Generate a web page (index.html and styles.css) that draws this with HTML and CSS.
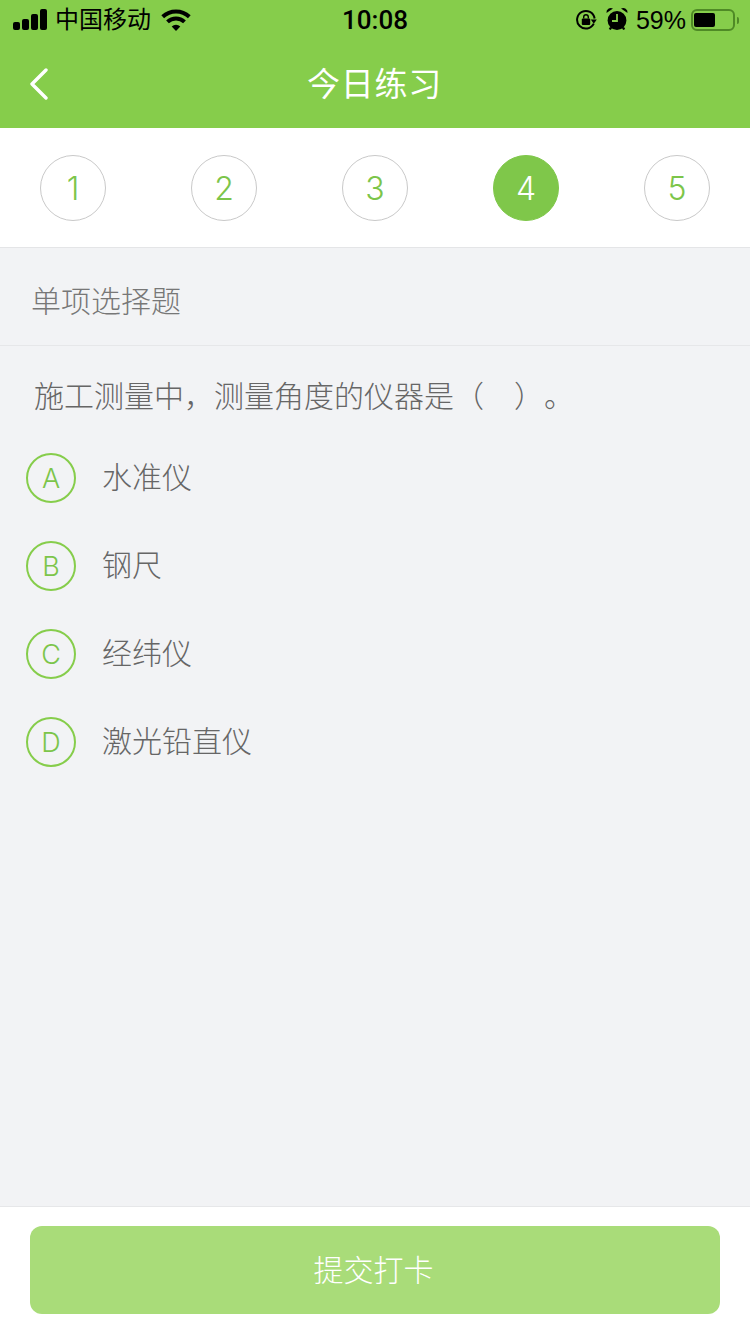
FILE: index.html
```html
<!DOCTYPE html>
<html lang="zh-CN">
<head>
    <meta charset="UTF-8">
    <meta name="viewport" content="width=device-width, initial-scale=1.0">
    <title>今日练习</title>
    <link rel="stylesheet" href="styles.css">
</head>
<body>
    <!-- Status bar + title -->
    <header class="top">
        <div class="status">
            <div class="status-left">
                <div class="signal"><i></i><i></i><i></i><i></i></div>
                <span class="carrier">中国移动</span>
                <svg class="wifi" width="30" height="22" viewBox="0 0 30 22">
                    <path d="M1.7 7.74 A19.5 19.5 0 0 1 28.3 7.74" fill="none" stroke="#000" stroke-width="4"/>
                    <path d="M6.5 12.86 A12.5 12.5 0 0 1 23.5 12.86" fill="none" stroke="#000" stroke-width="4"/>
                    <path d="M15 22 L10.7 17.4 A6.3 6.3 0 0 1 19.3 17.4 Z" fill="#000"/>
                </svg>
            </div>
            <span class="clock">10:08</span>
            <div class="status-right">
                <svg class="lock" width="22" height="22" viewBox="0 0 22 22">
                    <path d="M18.8 14.6 A8.8 8.8 0 1 1 19.6 9.5" fill="none" stroke="#000" stroke-width="2"/>
                    <path d="M15.8 10.5 L21.8 10.5 L18.8 14.8 Z" fill="#000"/>
                    <rect x="6.8" y="9.5" width="8.4" height="6.5" rx="1" fill="#000"/>
                    <path d="M8.7 9.5 V8 A2.3 2.3 0 0 1 13.3 8 V9.5" fill="none" stroke="#000" stroke-width="1.4"/>
                </svg>
                <svg class="alarm" width="24" height="26" viewBox="0 0 24 26">
                    <circle cx="12" cy="14.5" r="9.4" fill="#000"/>
                    <path d="M1.5 7 A4.4 4.4 0 0 1 8 2.5 Z M22.5 7 A4.4 4.4 0 0 0 16 2.5 Z" fill="#000"/>
                    <path d="M12 8 V15 H7" fill="none" stroke="#86cd4b" stroke-width="1.8"/>
                    <path d="M6 21.5 L4.8 23.5 M18 21.5 L19.2 23.5" stroke="#000" stroke-width="2.4"/>
                </svg>
                <span class="battery-text">59%</span>
                <div class="battery"><div class="battery-fill"></div></div>
                <div class="battery-cap"></div>
            </div>
        </div>
        <div class="titlebar">
            <svg class="back" width="20" height="32" viewBox="0 0 20 32">
                <path d="M17 2 L3 16 L17 30" fill="none" stroke="#fff" stroke-width="3.4" stroke-linecap="round" stroke-linejoin="round"/>
            </svg>
            <h1>今日练习</h1>
        </div>
    </header>

    <!-- Question numbers -->
    <nav class="steps">
        <div class="step">1</div>
        <div class="step">2</div>
        <div class="step">3</div>
        <div class="step active">4</div>
        <div class="step">5</div>
    </nav>

    <main class="main">
        <div class="qtype">单项选择题</div>
        <p class="question">施工测量中，测量角度的仪器是（<span class="blank"></span>）。</p>
        <ul class="options">
            <li><span class="letter">A</span><span class="opt-text">水准仪</span></li>
            <li><span class="letter">B</span><span class="opt-text">钢尺</span></li>
            <li><span class="letter">C</span><span class="opt-text">经纬仪</span></li>
            <li><span class="letter">D</span><span class="opt-text">激光铅直仪</span></li>
        </ul>
    </main>

    <footer class="bottom">
        <button type="button" class="submit">提交打卡</button>
    </footer>
</body>
</html>
```

FILE: styles.css
```css
* {
    box-sizing: border-box;
}

html, body {
    height: 100%;
}

body {
    margin: 0;
    display: flex;
    flex-direction: column;
    height: 1334px;
    overflow: hidden;
    background-color: #f2f3f5;
    font-family: "Liberation Sans", Arial, "Noto Sans CJK SC", sans-serif;
}

.top {
    height: 128px;
    flex: none;
    background-color: #86cd4b;
}

.status {
    height: 40px;
    padding: 0 11px 0 13px;
    display: flex;
    align-items: center;
    justify-content: space-between;
    position: relative;
    color: #000;
}

.status-left, .status-right {
    display: flex;
    align-items: center;
}

.signal {
    display: flex;
    align-items: flex-end;
    gap: 2px;
    height: 21px;
    margin-top: -1px;
}

.signal i {
    display: block;
    width: 7px;
    border-radius: 2px;
    background-color: #000;
}

.signal i:nth-child(1) { height: 8px; }
.signal i:nth-child(2) { height: 11px; }
.signal i:nth-child(3) { height: 16px; }
.signal i:nth-child(4) { height: 21px; }

.carrier {
    margin-left: 8px;
    font-size: 24px;
    line-height: 42px;
}

.wifi {
    margin-left: 10px;
    margin-top: 0;
}

.clock {
    position: absolute;
    left: 0;
    right: 0;
    text-align: center;
    font-family: Roboto, sans-serif;
    font-weight: 500;
    font-size: 26px;
    line-height: 42px;
}

.status-right {
    position: relative;
    z-index: 1;
}

.lock {
    margin-right: 1px;
}

.alarm {
    margin-left: 7px;
    margin-top: -3px;
}

.battery-text {
    margin-left: 7px;
    font-size: 25px;
    line-height: 40px;
}

.battery {
    width: 44px;
    height: 22px;
    margin-left: 5px;
    padding: 2px 1px;
    border: 2px solid #4f8a26;
    border-radius: 6px;
}

.battery-fill {
    width: 21px;
    height: 100%;
    border-radius: 2px;
    background-color: #000;
}

.battery-cap {
    width: 2px;
    height: 7px;
    margin-left: 2px;
    border-radius: 0 2px 2px 0;
    background-color: #4f8a26;
}

.titlebar {
    height: 88px;
    padding: 0 1px 4px 0;
    display: flex;
    align-items: center;
    justify-content: center;
    position: relative;
}

.back {
    position: absolute;
    left: 29px;
    top: 28px;
}

.titlebar h1 {
    margin: 0;
    color: #fff;
    font-size: 33px;
    font-weight: normal;
    letter-spacing: 0.8px;
}

.steps {
    flex: none;
    height: 120px;
    padding: 27px 40px 0;
    display: flex;
    justify-content: space-between;
    align-items: flex-start;
    background-color: #fff;
    border-bottom: 1px solid #e4e5e7;
}

.step {
    width: 66px;
    height: 66px;
    border: 1px solid #c9c9c9;
    border-radius: 50%;
    display: flex;
    align-items: center;
    justify-content: center;
    color: #7cc54a;
    font-family: Inter, sans-serif;
    font-weight: 350;
    font-size: 32px;
}

.step.active {
    border-color: #7fc74a;
    background-color: #7fc74a;
    color: #fff;
}

.main {
    flex: 1;
    min-height: 0;
}

.qtype {
    height: 98px;
    padding: 4px 0 0 31px;
    display: flex;
    align-items: center;
    border-bottom: 1px solid #e6e7e9;
    color: #777;
    font-size: 30px;
    font-weight: 300;
}

.question {
    margin: 0;
    padding: 31px 0 0 34px;
    color: #666;
    font-size: 30px;
    font-weight: 300;
    line-height: 40px;
    text-spacing-trim: space-all;
}

.blank {
    display: inline-block;
    width: 30px;
}

.options {
    list-style: none;
    margin: 17px 0 0;
    padding: 0 0 0 26px;
}

.options li {
    height: 88px;
    display: flex;
    align-items: center;
}

.opt-text {
    margin-bottom: 6px;
    color: #666;
    font-size: 30px;
    font-weight: 300;
}

.letter {
    width: 50px;
    height: 50px;
    margin-right: 26px;
    border: 2px solid #86cd4b;
    border-radius: 50%;
    display: flex;
    align-items: center;
    justify-content: center;
    color: #7cc54a;
    font-family: Inter, sans-serif;
    font-weight: 350;
    font-size: 27px;
}

.bottom {
    flex: none;
    height: 128px;
    padding: 19px 30px 0;
    background-color: #fff;
    border-top: 1px solid #e6e7e9;
}

.submit {
    display: block;
    width: 100%;
    height: 88px;
    padding: 0 3px 4px 0;
    border: none;
    border-radius: 12px;
    background-color: #a9dc79;
    color: #fff;
    font-family: inherit;
    font-size: 30px;
    font-weight: 300;
}
```
